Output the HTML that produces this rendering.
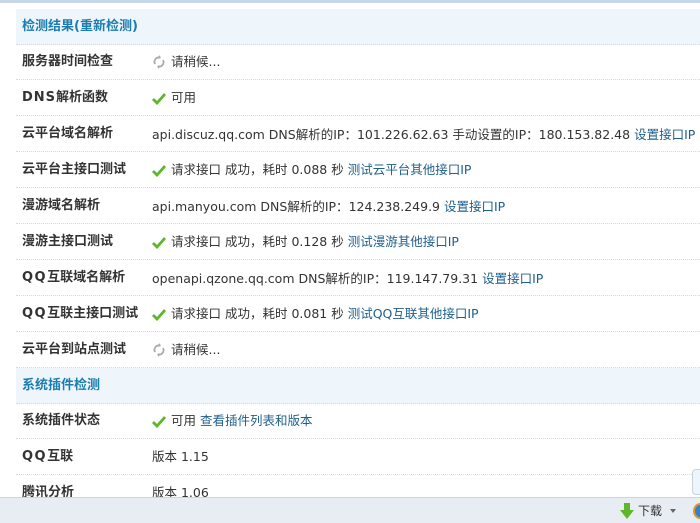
<!DOCTYPE html>
<html><head><meta charset="utf-8">
<style>
*{margin:0;padding:0;box-sizing:border-box}
html,body{width:700px;height:523px;overflow:hidden;background:#fff;font-family:"DejaVu Sans","Noto Sans CJK SC",sans-serif;font-size:12px;color:#333}
.topline{position:absolute;left:0;top:0;width:700px;height:3px;background:#c6d8e8}
.row{position:absolute;left:16px;width:700px;height:36px;border-bottom:1px dotted #d8d8d8}
.hd{background:#eef5fb;}
.row .l{position:absolute;left:6px;top:0;line-height:36px;font-weight:bold;color:#333;white-space:nowrap;font-size:13px;font-family:"DejaVu Sans","Noto Sans CJK SC",sans-serif}
.hd .l{color:#1a7cb0}
.lt{letter-spacing:1.5px}
.row .v{position:absolute;left:136px;top:0;line-height:36px;white-space:nowrap;color:#333;font-size:12.5px}
.cj{font-family:"Noto Sans CJK SC",sans-serif}
a{color:#1f5f8b;text-decoration:none}
.ic{display:inline-block;vertical-align:-3px;margin-right:5px}
.bottom{position:absolute;left:0;top:497px;width:700px;height:26px;background:#e8edf4;border-top:1px solid #cdd5df}
</style></head><body>
<div class="topline"></div>
<div class="row hd" style="top:9px"><span class="l">检测结果(重新检测)</span></div>
<div class="row" style="top:44px"><span class="l">服务器时间检查</span><span class="v"><svg class="ic" width="14" height="14" viewBox="0 0 14 14"><path d="M3 9a4.5 4.5 0 0 1 5-6.5M11 5a4.5 4.5 0 0 1-5 6.5" stroke="#aaa" stroke-width="1.8" fill="none"/><path d="M7 0l2 2.5-2.5 1.5zM7 14l-2-2.5 2.5-1.5z" fill="#aaa"/></svg>请稍候...</span></div>
<div class="row" style="top:80px"><span class="l"><span style="letter-spacing:1px">DNS</span>解析函数</span><span class="v"><svg class="ic" width="14" height="12" viewBox="0 0 14 12"><path d="M1 6l4 4 8-9" stroke="#5cb82a" stroke-width="2.8" fill="none"/></svg>可用</span></div>
<div class="row" style="top:116px"><span class="l">云平台域名解析</span><span class="v">api.discuz.qq.com DNS解析的IP<span class="cj">：</span>101.226.62.63 手动设置的IP<span class="cj">：</span>180.153.82.48 <a>设置接口IP</a></span></div>
<div class="row" style="top:152px"><span class="l">云平台主接口测试</span><span class="v"><svg class="ic" width="14" height="12" viewBox="0 0 14 12"><path d="M1 6l4 4 8-9" stroke="#5cb82a" stroke-width="2.8" fill="none"/></svg>请求接口 成功，耗时 0.088 秒 <a>测试云平台其他接口IP</a></span></div>
<div class="row" style="top:188px"><span class="l">漫游域名解析</span><span class="v">api.manyou.com DNS解析的IP<span class="cj">：</span>124.238.249.9 <a>设置接口IP</a></span></div>
<div class="row" style="top:224px"><span class="l">漫游主接口测试</span><span class="v"><svg class="ic" width="14" height="12" viewBox="0 0 14 12"><path d="M1 6l4 4 8-9" stroke="#5cb82a" stroke-width="2.8" fill="none"/></svg>请求接口 成功，耗时 0.128 秒 <a>测试漫游其他接口IP</a></span></div>
<div class="row" style="top:260px"><span class="l"><span class="lt">QQ</span>互联域名解析</span><span class="v">openapi.qzone.qq.com DNS解析的IP<span class="cj">：</span>119.147.79.31 <a>设置接口IP</a></span></div>
<div class="row" style="top:296px"><span class="l"><span class="lt">QQ</span>互联主接口测试</span><span class="v"><svg class="ic" width="14" height="12" viewBox="0 0 14 12"><path d="M1 6l4 4 8-9" stroke="#5cb82a" stroke-width="2.8" fill="none"/></svg>请求接口 成功，耗时 0.081 秒 <a>测试QQ互联其他接口IP</a></span></div>
<div class="row" style="top:332px"><span class="l">云平台到站点测试</span><span class="v"><svg class="ic" width="14" height="14" viewBox="0 0 14 14"><path d="M3 9a4.5 4.5 0 0 1 5-6.5M11 5a4.5 4.5 0 0 1-5 6.5" stroke="#aaa" stroke-width="1.8" fill="none"/><path d="M7 0l2 2.5-2.5 1.5zM7 14l-2-2.5 2.5-1.5z" fill="#aaa"/></svg>请稍候...</span></div>
<div class="row hd" style="top:368px"><span class="l">系统插件检测</span></div>
<div class="row" style="top:403px"><span class="l">系统插件状态</span><span class="v"><svg class="ic" width="14" height="12" viewBox="0 0 14 12"><path d="M1 6l4 4 8-9" stroke="#5cb82a" stroke-width="2.8" fill="none"/></svg>可用 <a>查看插件列表和版本</a></span></div>
<div class="row" style="top:439px"><span class="l"><span class="lt">QQ</span>互联</span><span class="v">版本 1.15</span></div>
<div class="row" style="top:475px"><span class="l">腾讯分析</span><span class="v">版本 1.06</span></div>
<div style="position:absolute;left:692px;top:469px;width:20px;height:26px;border:1px solid #c8d4e0;border-radius:4px;background:#eef4fa"></div>
<div class="bottom">
<svg style="position:absolute;left:620px;top:5px" width="14" height="16" viewBox="0 0 14 16"><path d="M4 0h6v7h4l-7 9-7-9h4z" fill="#5cb82a"/></svg>
<span style="position:absolute;left:638px;top:4px;font-size:12px;color:#333;font-family:'Noto Sans CJK SC',sans-serif">下载</span>
<svg style="position:absolute;left:670px;top:11px" width="6" height="4"><path d="M0 0h6l-3 4z" fill="#666"/></svg>
<div style="position:absolute;left:693px;top:5px;width:14px;height:16px;border-radius:50%;border:2px solid #d89a2a;background:#3a7fc8"></div>
</div>
</body></html>
